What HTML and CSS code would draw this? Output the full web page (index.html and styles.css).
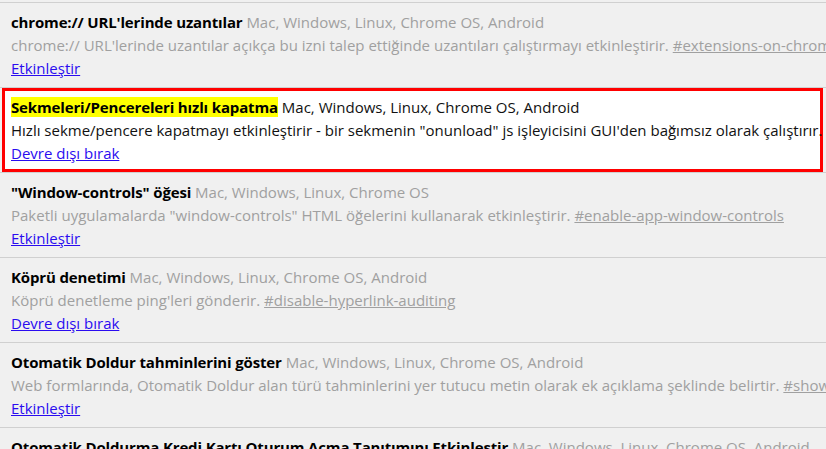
FILE: index.html
```html
<!DOCTYPE html>
<html lang="tr">
<head>
<meta charset="utf-8">
<title>Flags</title>
<link rel="stylesheet" href="styles.css">
</head>
<body>
<div class="flags">
  <div class="experiment">
    <div class="exp-line"><span class="exp-name">chrome:// URL'lerinde uzantılar</span> <span class="platforms">Mac, Windows, Linux, Chrome OS, Android</span></div>
    <div class="exp-line exp-desc">chrome:// URL'lerinde uzantılar açıkça bu izni talep ettiğinde uzantıları çalıştırmayı etkinleştirir. <a class="permalink" href="#">#extensions-on-chrome-urls</a></div>
    <div class="exp-line"><a class="action" href="#">Etkinleştir</a></div>
  </div>
  <div class="experiment experiment-ref">
    <div class="ref-box">
      <div class="exp-line"><span class="exp-name mark">Sekmeleri/Pencereleri hızlı kapatma</span> <span class="platforms">Mac, Windows, Linux, Chrome OS, Android</span></div>
      <div class="exp-line exp-desc">Hızlı sekme/pencere kapatmayı etkinleştirir - bir sekmenin "onunload" js işleyicisini GUI'den bağımsız olarak çalıştırır. <a class="permalink" href="#">#enable-fast-unload</a></div>
      <div class="exp-line"><a class="action" href="#">Devre dışı bırak</a></div>
    </div>
  </div>
  <div class="experiment">
    <div class="exp-line"><span class="exp-name">"Window-controls" öğesi</span> <span class="platforms">Mac, Windows, Linux, Chrome OS</span></div>
    <div class="exp-line exp-desc">Paketli uygulamalarda "window-controls" HTML öğelerini kullanarak etkinleştirir. <a class="permalink" href="#">#enable-app-window-controls</a></div>
    <div class="exp-line"><a class="action" href="#">Etkinleştir</a></div>
  </div>
  <div class="experiment">
    <div class="exp-line"><span class="exp-name">Köprü denetimi</span> <span class="platforms">Mac, Windows, Linux, Chrome OS, Android</span></div>
    <div class="exp-line exp-desc">Köprü denetleme ping'leri gönderir. <a class="permalink" href="#">#disable-hyperlink-auditing</a></div>
    <div class="exp-line"><a class="action" href="#">Devre dışı bırak</a></div>
  </div>
  <div class="experiment">
    <div class="exp-line"><span class="exp-name">Otomatik Doldur tahminlerini göster</span> <span class="platforms">Mac, Windows, Linux, Chrome OS, Android</span></div>
    <div class="exp-line exp-desc">Web formlarında, Otomatik Doldur alan türü tahminlerini yer tutucu metin olarak ek açıklama şeklinde belirtir. <a class="permalink" href="#">#show-autofill-type-predictions</a></div>
    <div class="exp-line"><a class="action" href="#">Etkinleştir</a></div>
  </div>
  <div class="experiment">
    <div class="exp-line"><span class="exp-name">Otomatik Doldurma Kredi Kartı Oturum Açma Tanıtımını Etkinleştir</span> <span class="platforms">Mac, Windows, Linux, Chrome OS, Android</span></div>
    <div class="exp-line exp-desc">Otomatik Doldurma Kredi Kartı Oturum Açma Tanıtımını etkinleştirir.</div>
    <div class="exp-line"><a class="action" href="#">Etkinleştir</a></div>
  </div>
</div>
</body>
</html>
```
FILE: styles.css
```css
html, body {
  margin: 0;
  padding: 0;
  background: #f0f0f0;
  overflow: hidden;
}

body {
  font-family: "Open Sans", "Noto Sans", "Liberation Sans", sans-serif;
  font-size: 15px;
  color: #000;
}

.flags {
  padding-top: 2px;
}

.experiment {
  border-top: 1px solid #d0d0d0;
  padding: 8px 0 7px 11px;
  height: 69px;
}

.exp-line {
  line-height: 23px;
  height: 23px;
  white-space: nowrap;
}

.exp-name {
  font-weight: bold;
  letter-spacing: -0.15px;
}

.platforms {
  color: #a0a0a0;
}

.exp-desc {
  color: #a0a0a0;
}

.permalink {
  color: #a0a0a0;
  text-decoration: underline;
}

.action {
  color: #2a0cf0;
  text-decoration: underline;
}

.experiment-ref {
  padding: 0 3px 0 2px;
  height: 84px;
}

.ref-box {
  border: 3px solid #ff0000;
  background: #fff;
  padding: 5px 0 4px 6px;
  height: 69px;
}

.experiment-ref .platforms,
.experiment-ref .exp-desc {
  color: #111;
}

.mark {
  background: #ffff00;
}
```
